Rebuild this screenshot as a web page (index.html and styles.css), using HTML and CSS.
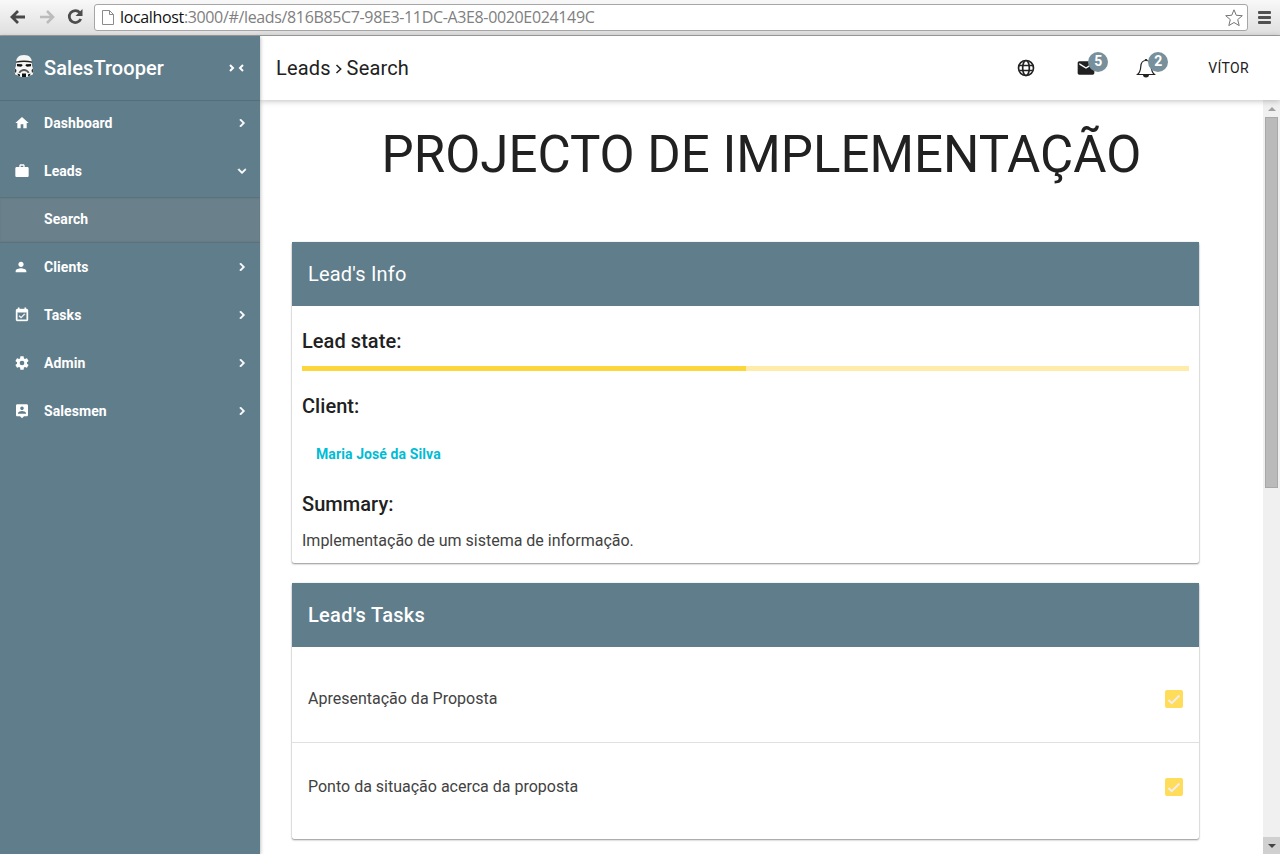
FILE: index.html
```html
<!DOCTYPE html>
<html lang="en">
<head>
<meta charset="utf-8">
<title>SalesTrooper</title>
<link rel="stylesheet" href="styles.css">
</head>
<body>
<div class="browser">
  <svg class="nav-icon back" width="16" height="14" viewBox="0 0 16 14"><path d="M8 1 2 7l6 6M2.500 7H15" fill="none" stroke="#484848" stroke-width="2.800"/></svg>
  <svg class="nav-icon forward" width="16" height="14" viewBox="0 0 16 14"><path d="M8 1l6 6-6 6M13.500 7H1" fill="none" stroke="#bcbcbc" stroke-width="2.600"/></svg>
  <svg class="nav-icon reload" width="16" height="16" viewBox="0 0 16 16"><path d="M12.800 3.600A6 6 0 1 0 13.800 10" fill="none" stroke="#4c4c4c" stroke-width="2.700"/><path d="M15.500 0v7H8.500z" fill="#4c4c4c"/></svg>
  <div class="address">
    <svg class="page-icon" width="12" height="15" viewBox="0 0 12 15"><path d="M.5.5h7l4 4v10H.5zM7.500.5v4h4" fill="#fff" stroke="#8b8b8b"/></svg>
    <span class="url"><span class="host">localhost</span>:3000/#/leads/816B85C7-98E3-11DC-A3E8-0020E024149C</span>
    <svg class="star" width="18" height="18" viewBox="0 0 18 18"><path d="M9 .8l2.300 5.500 6 .4-4.600 3.900 1.500 6L9 13.500l-5.200 3.100 1.500-6L.7 6.700l6-.4z" fill="#fff" stroke="#757575" stroke-linejoin="round"/></svg>
  </div>
  <div class="menu"><i></i><i></i><i></i></div>
</div>
<div class="app">
  <aside class="sidebar">
    <div class="brand">
      <svg class="trooper" width="20" height="24" viewBox="0 0 20 24"><path d="M2.200 11C1.300 4 4.500 1 10 1s8.700 3 7.800 10l1.700 5.500-.7 4-3.800 1.500-2 1H7l-2-1-3.800-1.500-.7-4z" fill="#f6f6f6"/><path d="M1.900 7.600Q10 5.600 18.100 7.600v1.200Q10 7 1.900 8.800z" fill="#222"/><path d="M3 10l5 .2.600 1.300-1.600 1.200-4-.5zM17 10l-5 .2-.6 1.300 1.600 1.200 4-.5z" fill="#111"/><path d="M4.500 18.500Q6.500 15 10 15t5.500 3.500l-1.500.8Q12.500 17 10 17t-4 2.300z" fill="#555"/><path d="M8 19.500h4V23H8zM3.500 19.500l2.500 1v1.800l-2-.8zM16.500 19.500l-2.500 1v1.800l2-.8z" fill="#111"/><path d="M1 14.500l1.500 1.500-.5 3-1.500-1.500zM19 14.500l-1.500 1.500.5 3 1.500-1.500z" fill="#333"/></svg>
      <span class="brand-name">SalesTrooper</span>
      <svg class="collapse" width="16" height="8" viewBox="0 0 16 8"><path d="M1 1l3 3-3 3M14 1l-3 3 3 3" fill="none" stroke="#fff" stroke-width="2"/></svg>
    </div>
    <nav>
      <a class="item"><svg class="icon" viewBox="0 0 24 24"><path d="M10 20v-6h4v6h5v-8h3L12 3 2 12h3v8z"/></svg><span>Dashboard</span><svg class="chevron" viewBox="0 0 24 24"><path d="M10 6L8.590 7.410 13.170 12l-4.580 4.590L10 18l6-6z"/></svg></a>
      <a class="item"><svg class="icon" viewBox="0 0 24 24"><path d="M20 6h-4V4c0-1.110-.89-2-2-2h-4c-1.110 0-2 .89-2 2v2H4c-1.110 0-2 .89-2 2v11c0 1.110.89 2 2 2h16c1.110 0 2-.89 2-2V8c0-1.110-.89-2-2-2zm-6 0h-4V4h4z"/></svg><span>Leads</span><svg class="chevron" viewBox="0 0 24 24"><path d="M16.590 8.590L12 13.170 7.410 8.590 6 10l6 6 6-6z"/></svg></a>
      <a class="item sub"><span>Search</span></a>
      <a class="item"><svg class="icon person" viewBox="0 0 24 24"><path d="M12 12c2.210 0 4-1.790 4-4s-1.790-4-4-4-4 1.790-4 4 1.790 4 4 4zm0 2c-2.670 0-8 1.340-8 4v2h16v-2c0-2.660-5.330-4-8-4z"/></svg><span>Clients</span><svg class="chevron" viewBox="0 0 24 24"><path d="M10 6L8.590 7.410 13.170 12l-4.580 4.590L10 18l6-6z"/></svg></a>
      <a class="item"><svg class="icon" viewBox="0 0 24 24"><path d="M16.530 11.060L15.470 10l-4.880 4.880-2.120-2.120-1.060 1.060L10.590 17l5.940-5.940zM19 3h-1V1h-2v2H8V1H6v2H5c-1.110 0-1.990.9-1.990 2L3 19c0 1.100.89 2 2 2h14c1.100 0 2-.9 2-2V5c0-1.100-.9-2-2-2zm0 16H5V8h14v11z" stroke="#fff" stroke-width=".6"/></svg><span>Tasks</span><svg class="chevron" viewBox="0 0 24 24"><path d="M10 6L8.590 7.410 13.170 12l-4.580 4.590L10 18l6-6z"/></svg></a>
      <a class="item"><svg class="icon" viewBox="0 0 24 24"><path d="M19.430 12.980c.04-.32.07-.64.07-.98s-.03-.66-.07-.98l2.110-1.650c.19-.15.24-.42.12-.64l-2-3.460c-.12-.22-.39-.3-.61-.22l-2.490 1c-.52-.4-1.080-.73-1.690-.98l-.38-2.650C14.460 2.180 14.250 2 14 2h-4c-.25 0-.46.18-.49.42l-.38 2.650c-.61.25-1.170.59-1.690.98l-2.490-1c-.23-.09-.49 0-.61.22l-2 3.460c-.13.22-.07.49.12.64l2.110 1.650c-.04.32-.07.65-.07.98s.03.66.07.98l-2.110 1.650c-.19.15-.24.42-.12.64l2 3.460c.12.22.39.3.61.22l2.490-1c.52.4 1.080.73 1.690.98l.38 2.650c.03.24.24.42.49.42h4c.25 0 .46-.18.49-.42l.38-2.650c.61-.25 1.170-.59 1.690-.98l2.490 1c.23.09.49 0 .61-.22l2-3.460c.12-.22.07-.49-.12-.64zM12 15.500a3.500 3.500 0 1 1 0-7 3.500 3.500 0 0 1 0 7z"/></svg><span>Admin</span><svg class="chevron" viewBox="0 0 24 24"><path d="M10 6L8.590 7.410 13.170 12l-4.580 4.590L10 18l6-6z"/></svg></a>
      <a class="item"><svg class="icon" viewBox="0 0 24 24"><path d="M19 2H5c-1.110 0-2 .9-2 2v14c0 1.100.89 2 2 2h4l3 3 3-3h4c1.100 0 2-.9 2-2V4c0-1.100-.9-2-2-2zm-7 3.300a2.700 2.700 0 1 1 0 5.400 2.700 2.700 0 0 1 0-5.400zM18 16H6v-.9c0-2 4-3.100 6-3.100s6 1.100 6 3.100z"/></svg><span>Salesmen</span><svg class="chevron" viewBox="0 0 24 24"><path d="M10 6L8.590 7.410 13.170 12l-4.580 4.590L10 18l6-6z"/></svg></a>
    </nav>
  </aside>
  <main class="main">
    <header class="toolbar">
      <div class="crumbs"><span>Leads</span><svg width="8" height="10" viewBox="0 0 8 10"><path d="M1.500 1l4.200 4-4.200 4" fill="none" stroke="#222" stroke-width="1.500"/></svg><span class="crumb-current">Search</span></div>
      <div class="actions">
        <svg class="globe" width="20" height="20" viewBox="0 0 24 24"><g fill="none" stroke="#222" stroke-width="2"><circle cx="12" cy="12" r="9"/><ellipse cx="12" cy="12" rx="4" ry="9"/><path d="M4 9h16M4 15h16"/></g></svg>
        <div class="notice mail"><svg width="20" height="20" viewBox="0 0 24 24"><path d="M20 4H4c-1.100 0-2 .9-2 2v12c0 1.100.9 2 2 2h16c1.100 0 2-.9 2-2V6c0-1.100-.9-2-2-2zm0 4l-8 5-8-5V6l8 5 8-5z" fill="#212121"/></svg><b class="badge">5</b></div>
        <div class="notice bell"><svg width="20" height="20" viewBox="0 0 20 20"><path d="M1.500 16.500c2.500-2 3-3.500 3.300-8C5 4.500 7 2.500 10 2.500s5 2 5.200 6c.3 4.500.8 6 3.300 8z" fill="none" stroke="#222" stroke-width="1.200"/><path d="M8.600 2.500a1.400 1.400 0 0 1 2.800 0M7 16.800h6a3 2.700 0 0 1-6 0z" fill="#222"/></svg><b class="badge">2</b></div>
        <span class="user">VÍTOR</span>
      </div>
    </header>
    <div class="body">
      <div class="content">
        <h1 class="title"><span>PROJECTO DE IMPLEMENTAÇÃO</span></h1>
        <section class="card info">
          <h2 class="card-head info-head"><span>Lead's Info</span></h2>
          <div class="card-body">
            <h3 class="label"><span>Lead state:</span></h3>
            <div class="progress"><div class="bar" style="width:50%"></div></div>
            <h3 class="label client"><span>Client:</span></h3>
            <a class="client-link">Maria José da Silva</a>
            <h3 class="label summary"><span>Summary:</span></h3>
            <p class="text">Implementação de um sistema de informação.</p>
          </div>
        </section>
        <section class="card tasks">
          <h2 class="card-head"><span>Lead's Tasks</span></h2>
          <div class="task-list">
            <div class="task"><span>Apresentação da Proposta</span><svg class="check" width="18" height="18" viewBox="0 0 18 18"><path d="M3.500 10l3.200 3.200L14.500 5.500" fill="none" stroke="#eee" stroke-width="2"/></svg></div>
            <div class="task"><span>Ponto da situação acerca da proposta</span><svg class="check" width="18" height="18" viewBox="0 0 18 18"><path d="M3.500 10l3.200 3.200L14.500 5.500" fill="none" stroke="#eee" stroke-width="2"/></svg></div>
          </div>
        </section>
      </div>
      <div class="scrollbar"><div class="arrow up"></div><div class="thumb"></div><div class="arrow down"></div></div>
    </div>
  </main>
</div>
</body>
</html>
```
FILE: styles.css
```css
* { box-sizing: border-box; }
body { margin: 0; width: 1280px; height: 854px; overflow: hidden; font-family: Roboto, sans-serif; color: #212121; display: flex; flex-direction: column; }
h1, h2, h3, p { margin: 0; font-weight: 400; }
svg { flex: none; display: block; }
.browser { height: 36px; flex: none; display: flex; align-items: center; padding: 0 8px 1px 10px; background: linear-gradient(#f8f8f8, #dfdfdf); border-bottom: 1px solid #a3a3a3; }
.forward { margin-left: 13px; }
.reload { margin-left: 12px; }
.address { margin-left: 11px; width: 1154px; height: 27px; display: flex; align-items: center; border: 1px solid #a6a6a6; border-radius: 3px; background: #fff; padding: 0 4px 0 7px; }
.url { flex: 1; margin-left: 6px; font: 16px/24px "Open Sans", sans-serif; letter-spacing: -.35px; color: #808080; white-space: nowrap; }
.host { color: #111; }
.star { margin-top: 2px; }
.menu { margin-left: 10px; display: flex; flex-direction: column; gap: 2px; }
.menu i { display: block; width: 13px; height: 3px; border-radius: 1px; background: #505050; }
.app { flex: 1; display: flex; min-height: 0; }
.sidebar { width: 260px; flex: none; background: #607d8b; color: #fff; box-shadow: 0 1px 4px rgba(0,0,0,.35); z-index: 2; }
.brand { height: 65px; display: flex; align-items: center; padding: 0 15px 1px 14px; border-bottom: 1px solid #546e7a; }
.trooper { margin-top: -4px; }
.brand-name { flex: 1; margin-left: 10px; font-size: 20px; font-weight: 500; letter-spacing: .08px; }
.item { height: 48px; display: flex; align-items: center; padding: 0 10px 4px 14px; font-size: 14px; font-weight: 700; letter-spacing: .08px; }
.icon { width: 16px; height: 16px; fill: #fff; }
.person { margin-left: -1px; margin-right: 1px; }
.item span { flex: 1; margin-left: 14px; }
.chevron { width: 16px; height: 16px; fill: #fff; stroke: #fff; stroke-width: 1; }
.item.sub { height: 46px; margin-bottom: 2px; padding: 0 10px 2px 30px; background: #6a808b; box-shadow: inset 0 2px 2px -1px rgba(0,0,0,.15), inset 0 -2px 2px -1px rgba(0,0,0,.15); }
.main { flex: 1; display: flex; flex-direction: column; min-width: 0; }
.toolbar { height: 64px; flex: none; display: flex; justify-content: space-between; align-items: center; padding: 0 31px 0 16px; background: #fff; box-shadow: 0 1px 6px rgba(0,0,0,.25); z-index: 1; }
.crumbs { display: flex; align-items: center; gap: 4px; font-size: 20px; letter-spacing: .15px; }
.crumbs svg { margin-top: 2px; }
.actions { display: flex; align-items: center; }
.notice { position: relative; margin-left: 40px; }
.badge { position: absolute; left: 12px; top: -6px; width: 20px; height: 20px; border-radius: 50%; background: #78909c; color: #fff; font-size: 14px; line-height: 19px; text-align: center; }
.user { margin: -1px 0 0 52px; font-size: 14px; letter-spacing: .35px; }
.body { flex: 1; min-height: 0; display: flex; }
.content { flex: 1; padding: 0 64px 0 32px; }
.title { height: 142px; padding-top: 24px; margin-right: -32px; font-size: 51px; line-height: 61px; text-align: center; white-space: nowrap; }
.card { border-radius: 2px; box-shadow: 0 1px 2px rgba(0,0,0,.42), 0 0 1px rgba(0,0,0,.25); }
.info { height: 321px; }
.tasks { margin-top: 20px; height: 256px; }
.card-head { height: 64px; padding-left: 16px; background: #607d8b; color: #fff; font-size: 20px; font-weight: 500; line-height: 64px; letter-spacing: .3px; }
.info-head { font-weight: 400; letter-spacing: .2px; }
.card-body { padding: 0 10px; }
.label { padding-top: 20px; font-size: 20px; font-weight: 500; line-height: 30px; letter-spacing: .05px; }
.progress { height: 5px; margin-top: 10px; background: #ffecaa; }
.bar { height: 5px; background: #fdd63c; }
.client-link { display: block; margin: 18px 0 0 14px; font-size: 14px; font-weight: 700; line-height: 30px; letter-spacing: .1px; color: #00bcd4; }
.summary { padding-top: 20px; }
.text { margin-top: 10px; font-size: 16px; line-height: 24px; color: #424242; }
.task-list { padding-top: 8px; }
.task { height: 88px; display: flex; align-items: center; justify-content: space-between; padding: 0 16px; font-size: 16px; color: #424242; border-bottom: 1px solid #e0e0e0; }
.task:last-child { border-bottom-color: transparent; }
.check { background: #ffdc59; border-radius: 2px; }
.scrollbar { width: 17px; flex: none; display: flex; flex-direction: column; background: #f0f0f0; }
.arrow { height: 17px; display: grid; place-items: center; }
.arrow::before { content: ""; border: 4px solid transparent; }
.up::before { border-top: 0; border-bottom-color: #a0a0a0; }
.down { margin-top: auto; background: #d0d0d0; }
.down::before { border-bottom: 0; border-top-color: #444; }
.thumb { height: 371px; margin: 0 2px; background: #bababa; border: 1px solid #a8a8a8; }
```
